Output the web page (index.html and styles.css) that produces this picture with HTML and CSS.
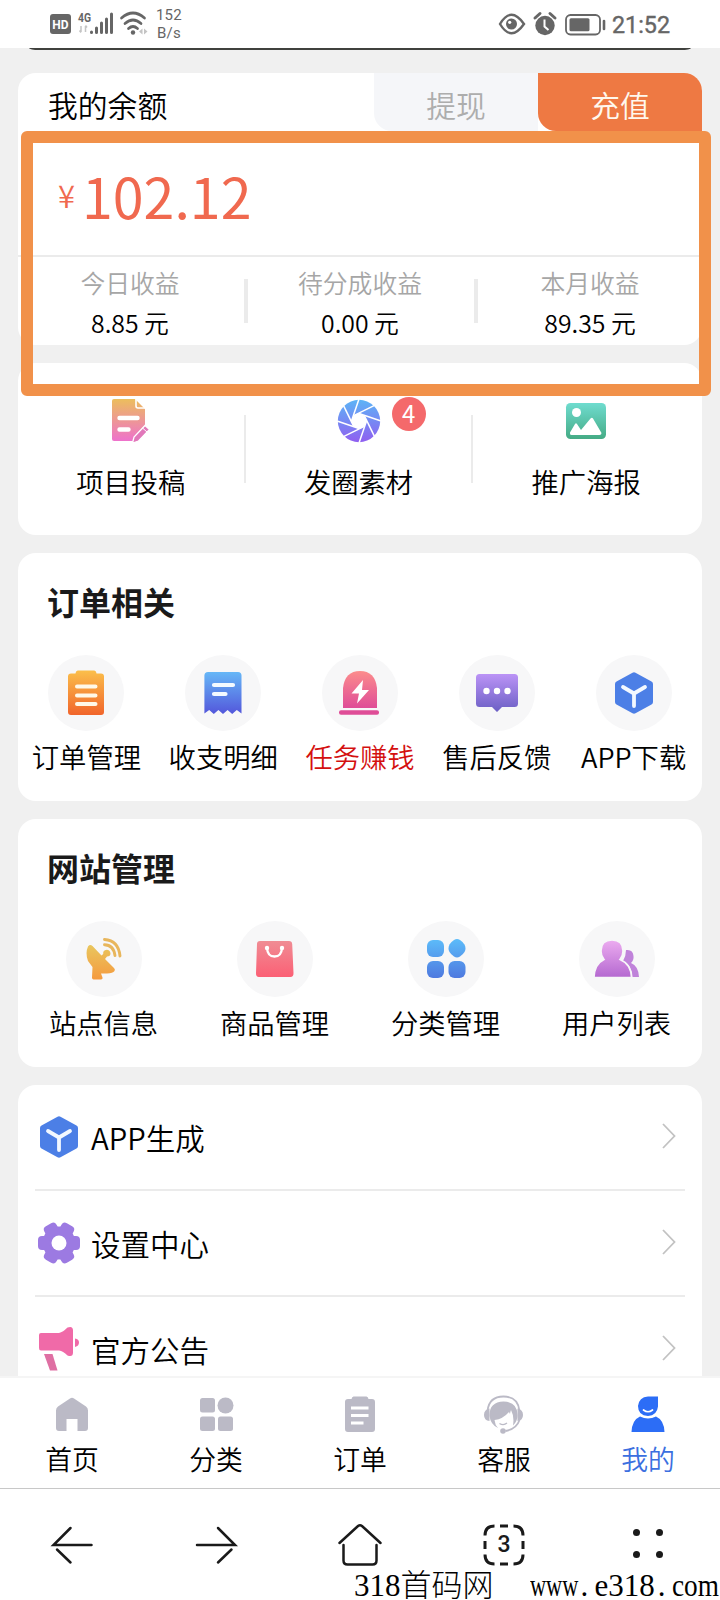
FILE: index.html
```
<!DOCTYPE html>
<html lang="zh-CN">
<head>
<meta charset="utf-8">
<title>我的</title>
<link rel="stylesheet" href="styles.css">
</head>
<body>
<svg class="defs" width="0" height="0" aria-hidden="true">
  <defs>
    <linearGradient id="gDoc" x1="0" y1="0" x2="0" y2="1"><stop offset="0" stop-color="#ecbe5c"/><stop offset="1" stop-color="#ee72cc"/></linearGradient>
    <linearGradient id="gLens" x1="0" y1="0" x2="0" y2="1"><stop offset="0" stop-color="#5cb4f6"/><stop offset="1" stop-color="#905ff0"/></linearGradient>
    <linearGradient id="gPic" x1="0" y1="0" x2="0" y2="1"><stop offset="0" stop-color="#6fdccf"/><stop offset="1" stop-color="#45ab85"/></linearGradient>
    <linearGradient id="gOrder" x1="0" y1="0" x2="0" y2="1"><stop offset="0" stop-color="#fbbf4b"/><stop offset="1" stop-color="#f1652b"/></linearGradient>
    <linearGradient id="gBill" x1="0" y1="0" x2="0" y2="1"><stop offset="0" stop-color="#66b7f7"/><stop offset="1" stop-color="#5357db"/></linearGradient>
    <linearGradient id="gAlarm" x1="0" y1="0" x2="0" y2="1"><stop offset="0" stop-color="#fc8c8c"/><stop offset="1" stop-color="#df4d97"/></linearGradient>
    <linearGradient id="gChat" x1="0" y1="0" x2="0" y2="1"><stop offset="0" stop-color="#bb93f6"/><stop offset="1" stop-color="#6b5fc4"/></linearGradient>
    <linearGradient id="gDish" x1="0" y1="0" x2="0" y2="1"><stop offset="0" stop-color="#e9c65e"/><stop offset="1" stop-color="#f59a3e"/></linearGradient>
    <linearGradient id="gBag" x1="0" y1="0" x2="0" y2="1"><stop offset="0" stop-color="#f08c94"/><stop offset="1" stop-color="#fb6075"/></linearGradient>
    <linearGradient id="gGrid" gradientUnits="userSpaceOnUse" x1="0" y1="0" x2="0" y2="38"><stop offset="0" stop-color="#5cbcfa"/><stop offset="1" stop-color="#4f7be0"/></linearGradient>
    <linearGradient id="gUser" x1="0" y1="0" x2="0" y2="1"><stop offset="0" stop-color="#ecacf0"/><stop offset="1" stop-color="#b468d0"/></linearGradient>
    <symbol id="cube" viewBox="0 0 40 42"><path fill="#4c7fe6" d="M18.5.7q1.500-.9 3 0L37.500 9.500q1.500.9 1.500 2.500v18q0 1.600-1.500 2.500l-16 8.800q-1.500.9-3 0l-16-8.800Q1 31.600 1 30V12q0-1.600 1.500-2.500z"/><path d="M9 15l11 6.500L31 15M20 21.500V34" fill="none" stroke="#f2f8ff" stroke-width="3.800" stroke-linecap="round" stroke-linejoin="round"/></symbol>
    <symbol id="chev" viewBox="0 0 16 28"><path d="M2 2l11.500 12L2 26" fill="none" stroke="#c2c2c2" stroke-width="1.800"/></symbol>
  </defs>
</svg>

<header class="status">
  <svg class="status-icons" width="104" height="26" viewBox="0 0 104 26">
    <rect x="0" y="3" width="21" height="20" rx="3" fill="#666"/>
    <text x="10.500" y="18" class="hd" text-anchor="middle">HD</text>
    <text x="28" y="11" class="g4" textLength="13" lengthAdjust="spacingAndGlyphs">4G</text>
    <path d="M31 15v6M29.500 19.500L31 21.500M35.500 21v-6M37 16.500L35.500 14.500" stroke="#c4c4c4" stroke-width="1.500" fill="none"/>
    <g stroke="#666" stroke-width="3" stroke-linecap="round"><path d="M41.500 21v.5M46.500 17v4.500M51.500 12v9.500M56.500 8v13.500M61.500 3v18.500"/></g>
    <g fill="none" stroke="#666" stroke-width="2.700" stroke-linecap="round"><path d="M71.500 7q11.500-10 23 0M75 12.500q8-7 16 0M78.500 17.500q4.500-4 9 0"/></g>
    <circle cx="83" cy="21.500" r="2.200" fill="#666"/>
    <path d="M92.500 17.500l-3.500 3 3.500 3zM94 17.500l3.500 3-3.500 3z" fill="#c4c4c4"/>
  </svg>
  <div class="speed">152<br>B/s</div>
  <div class="status-right">
    <svg width="112" height="26" viewBox="0 0 112 26">
      <g fill="none" stroke="#666" stroke-width="2.400"><path d="M2 13Q13-5.500 26 13 13 31.500 2 13z"/></g><circle cx="13.500" cy="13" r="5.500" fill="#666"/><circle cx="11.700" cy="11.300" r="1.600" fill="#fff"/>
      <circle cx="47" cy="14.500" r="9.700" fill="#666"/><path d="M37 7l5-4.500M57 7l-5-4.500" stroke="#666" stroke-width="3" stroke-linecap="round"/><path d="M46.500 8.500v7l4 3.500" fill="none" stroke="#fff" stroke-width="2"/>
      <rect x="68" y="4" width="34" height="19.500" rx="4.500" fill="none" stroke="#666" stroke-width="1.800"/><rect x="71.500" y="7.300" width="20" height="13" rx="1.500" fill="#666"/><path d="M106 10v8" stroke="#666" stroke-width="2.600" stroke-linecap="round"/>
    </svg>
    <span class="clock">21:52</span>
  </div>
</header>

<main class="page">
  <div class="banner-edge"></div>

  <section class="card balance">
    <div class="balance-head">
      <span class="balance-title">我的余额</span>
      <span class="tab withdraw">提现</span>
      <span class="tab recharge">充值</span>
    </div>
    <div class="amount"><span class="yen">¥</span><span class="num">102.12</span></div>
    <div class="stats">
      <div class="stat"><span class="stat-label">今日收益</span><span>8.85 元</span></div>
      <div class="bar"></div>
      <div class="stat mid"><span class="stat-label">待分成收益</span><span>0.00 元</span></div>
      <div class="bar"></div>
      <div class="stat"><span class="stat-label">本月收益</span><span>89.35 元</span></div>
    </div>
  </section>
  <div class="highlight"></div>

  <section class="card quick">
    <div class="quick-item">
      <svg width="40" height="46" viewBox="0 0 40 46"><path fill="url(#gDoc)" d="M3 1h21l10 10v17L22 43H3Q1 43 1 41V3Q1 1 3 1z"/><path d="M25 1v7q0 2 2 2h7" fill="none" stroke="#fff" stroke-width="1.600"/><path d="M8.500 20h18M8.500 31.500h9" stroke="#fff" stroke-width="4.400" stroke-linecap="round"/><path d="M34 27.500l4.500 4-11 11.500-6 2 1.500-6z" fill="#e178ba" stroke="#fff" stroke-width="1.300"/><path d="M31.500 30l4.500 4" stroke="#fff"/></svg>
      <span>项目投稿</span>
    </div>
    <div class="rule"></div>
    <div class="quick-item">
      <svg width="44" height="46" viewBox="0 0 44 46"><circle cx="22" cy="23" r="21.200" fill="url(#gLens)"/><circle cx="22" cy="23" r="7.500" fill="#fff"/><g stroke="#fff" stroke-width="1.500"><path id="blade" d="M14.500 23L22 1"/><use href="#blade" transform="rotate(45 22 23)"/><use href="#blade" transform="rotate(90 22 23)"/><use href="#blade" transform="rotate(135 22 23)"/><use href="#blade" transform="rotate(180 22 23)"/><use href="#blade" transform="rotate(225 22 23)"/><use href="#blade" transform="rotate(270 22 23)"/><use href="#blade" transform="rotate(315 22 23)"/></g></svg>
      <span>发圈素材</span>
      <b class="badge">4</b>
    </div>
    <div class="rule"></div>
    <div class="quick-item">
      <svg width="40" height="46" viewBox="0 0 40 46"><rect y="5" width="40" height="36" rx="4.500" fill="url(#gPic)"/><circle cx="10.500" cy="14.500" r="4.500" fill="#fff"/><path d="M4 34.500l5-8.500q1-1.500 2 0l4 6 9.500-11.500q1.500-1.500 2.500 0l8.500 14.500q0 2-2 2H5.500q-2 0-1.500-2z" fill="#fff"/></svg>
      <span>推广海报</span>
    </div>
  </section>

  <section class="card group">
    <h2>订单相关</h2>
    <div class="grid">
      <div class="item"><i><svg width="36" height="46" viewBox="0 0 36 46"><path fill="url(#gOrder)" d="M10 .5h16q2 0 2.500 3H33q3 0 3 3V42q0 3-3 3H3q-3 0-3-3V6.500q0-3 3-3h4.500Q8 .5 10 .5z"/><path d="M9 16.500h18.500M9 25.500h18.500M9 34h18.500" stroke="#fff8e8" stroke-width="4" stroke-linecap="round"/></svg></i><span>订单管理</span></div>
      <div class="item"><i><svg width="38" height="46" viewBox="0 0 38 46"><path fill="url(#gBill)" d="M4 2h30q3.500 0 3.500 3.500V43.500L32.800 40l-4.600 4-4.600-4-4.600 4-4.600-4-4.600 4-4.600-4-4.800 3.500V5.500Q.5 2 4 2z"/><path d="M10 15h19M10 24h11.500" stroke="#f4faff" stroke-width="4.200" stroke-linecap="round"/></svg></i><span>收支明细</span></div>
      <div class="item hot"><i><svg width="40" height="46" viewBox="0 0 40 46"><path fill="url(#gAlarm)" d="M3 38V18Q5 1 20 1t17 17v20z"/><rect x="-1" y="40.300" width="40" height="4.400" rx="2" fill="#df4d97"/><path d="M23 10L11.500 23.500H19L17 33.500 29 20h-7z" fill="#fff"/></svg></i><span>任务赚钱</span></div>
      <div class="item"><i><svg width="42" height="46" viewBox="0 0 42 46"><path fill="url(#gChat)" d="M3.500 4h35Q42 4 42 7.500v26q0 3.500-3.500 3.500H26l-5 5-5-5H3.500Q0 37 0 33.500v-26Q0 4 3.500 4z"/><g fill="#fff"><circle cx="10.500" cy="21" r="3.200"/><circle cx="21" cy="21" r="3.200"/><circle cx="31.500" cy="21" r="3.200"/></g></svg></i><span>售后反馈</span></div>
      <div class="item"><i><svg width="40" height="42"><use href="#cube"/></svg></i><span>APP下载</span></div>
    </div>
  </section>

  <section class="card group">
    <h2>网站管理</h2>
    <div class="grid">
      <div class="item"><i><svg width="38" height="44" viewBox="0 0 38 44"><path fill="url(#gDish)" d="M7.500 9Q5 7 3 9.500 0 16 3 24l4.500 6-.5 10.500q0 2 1.500 2h7.500q2 0 1.500-2L16 36.500h6q6-.3 7.500-2.500 1-1.500-.5-3L20 22l2-2.500q3.500 0 3.500-3.200-.5-3.500-3.800-3.500-4 .5-3.500 4.200L16.500 18.500z"/><path d="M19.500 7.800Q28.500 8 30 18.500M19.500 2.500Q33.500 3.500 35 19" fill="none" stroke="#e8b65c" stroke-width="2.900" stroke-linecap="round"/></svg></i><span>站点信息</span></div>
      <div class="item"><i><svg width="40" height="40" viewBox="0 0 40 40"><path fill="url(#gBag)" d="M5 2h29q3 0 3.200 3l1.300 29q.2 4-3.200 4H4Q.8 38 1 34L2 5q0-3 3-3z"/><path d="M12 9q.5 8.500 7.500 8.500T27 9" fill="none" stroke="#fff" stroke-width="2.300"/><circle cx="12" cy="9" r="2.200" fill="#fff"/><circle cx="27" cy="9" r="2.200" fill="#fff"/></svg></i><span>商品管理</span></div>
      <div class="item"><i><svg width="40" height="40" viewBox="0 0 40 40"><g fill="url(#gGrid)"><rect x="1" y="1" width="17" height="17" rx="6"/><path d="M28 1q3-2 6 0 3 2 4.500 4.500 2 4 0 7.500Q37 15.500 34 17.500q-3 2-6 0-3-2-4.500-4.500-2-3.500 0-7.500Q25 3 28 1z"/><rect x="1" y="22" width="17" height="17" rx="6"/><rect x="22.500" y="22" width="17" height="17" rx="6"/></g></svg></i><span>分类管理</span></div>
      <div class="item"><i><svg width="46" height="38" viewBox="0 0 46 38"><path d="M32 10q7-1 7.500 6 .5 4-2.500 7 7.500 3 8 14h-6.500Q38 25 29 21q3-5 3-11z" fill="#c083da"/><path stroke="#f7f7f8" stroke-width="1.600" fill="url(#gUser)" d="M18 0q11 0 11 11 0 5-3 8.500Q37 24 37.500 37.500H0Q.5 24 10 19.500 7 16 7 11 7 0 18 0z"/></svg></i><span>用户列表</span></div>
    </div>
  </section>

  <section class="card list">
    <div class="row"><svg class="row-icon" width="46" height="42" viewBox="0 0 46 42"><use href="#cube" width="40" height="42" x="4"/></svg><span>APP生成</span><svg width="16" height="28"><use href="#chev"/></svg></div>
    <div class="row"><svg class="row-icon" width="46" height="42" viewBox="-3 0 46 42"><g fill="#9c7ae2"><circle cx="21" cy="21" r="16.500"/><rect id="tooth" x="0" y="14" width="42" height="14" rx="4"/><use href="#tooth" transform="rotate(60 21 21)"/><use href="#tooth" transform="rotate(120 21 21)"/></g><circle cx="21" cy="21" r="7.500" fill="#fff"/></svg><span>设置中心</span><svg width="16" height="28"><use href="#chev"/></svg></div>
    <div class="row"><svg class="row-icon" width="46" height="46" viewBox="-3 0 46 46"><path fill="#f06aa8" d="M3 7h18q4-1 8.500-5.500 5.500-2 5.500 3v22q0 5-5.500 3Q25 25 21 24.500H3Q1 24.500 1 22V9Q1 7 3 7zM37 12.500q4 .5 4 4t-4 4.500z"/><path fill="#df6fa3" d="M6 28h8.500L19.500 44.500H12z"/></svg><span>官方公告</span><svg width="16" height="28"><use href="#chev"/></svg></div>
  </section>
</main>

<nav class="tabs">
  <div><svg width="40" height="40" viewBox="0 0 40 40"><path fill="#bbbac6" d="M18 4.500q2-1.500 4 0l12 8q2 1.500 2 4V34q0 3-3 3h-7.500V25h-11v12H7q-3 0-3-3V16.500q0-2.500 2-4z"/></svg><span>首页</span></div>
  <div><svg width="40" height="40" viewBox="0 0 40 40"><g fill="#bbbac6"><rect x="4" y="4" width="15" height="14.500" rx="2.500"/><circle cx="29.500" cy="11.500" r="8"/><rect x="4" y="22.500" width="15" height="14.500" rx="2.500"/><rect x="22" y="22.500" width="15" height="14.500" rx="2.500"/></g></svg><span>分类</span></div>
  <div><svg width="40" height="40" viewBox="0 0 40 40"><path fill="#bbbac6" d="M13.500 2.500h13q1.500 0 2 2.500H32q3 0 3 3v27q0 3-3 3H8q-3 0-3-3V8q0-3 3-3h3.500q.5-2.500 2-2.500z"/><path d="M11 14h17.500M11 21.500h17.500M11 29h12.500" stroke="#fff" stroke-width="2.800"/></svg><span>订单</span></div>
  <div><svg width="40" height="40" viewBox="0 0 40 40"><path d="M3.500 17Q5 2.500 19.500 2.500T35.500 17M35.500 26q-3 9-14 11" fill="none" stroke="#bbbac6" stroke-width="1.800"/><path fill="#bbbac6" d="M5.500 14.500V27Q0 26.500 0 21t5.500-6.500zM33.500 14.500V27q5.500-.5 5.500-6t-5.500-6.500z"/><path fill="#bbbac6" d="M5.500 22Q5 8 19.500 7.500 34 8 33.500 22q0 5-4.500 9.500 1.500-9-2-15.500-1 2.500-1 4l-1-2q-6 7-14.500 8 .5 5 3.500 8Q6.500 30.500 5.500 22z"/><circle cx="19" cy="37" r="2.800" fill="#bbbac6"/><path d="M15.500 29.500q4 2.500 7.500-.5" stroke="#bbbac6" stroke-width="1.300" fill="none"/></svg><span>客服</span></div>
  <div class="active"><svg width="40" height="40" viewBox="0 0 40 40"><path fill="#2c6df6" d="M20 2.500h10v10q-1 9-10 9.500-10-.5-10-10 1-9 10-9.500zM3.500 38Q4 26 12 22.500q8 4 16 0Q36 26 36.500 38z"/><path d="M15.500 16q4.500 3.500 9 0" fill="none" stroke="#fff" stroke-width="1.700" stroke-linecap="round"/></svg><span>我的</span></div>
</nav>

<footer class="browser">
  <svg width="44" height="44" viewBox="0 0 44 44"><path d="M20.500 5L3.500 22h38M7 26.500L20.500 39.500" class="ink"/></svg>
  <svg width="44" height="44" viewBox="0 0 44 44"><path d="M24 5L41 22H3M37.500 26.500L24 39.500" class="ink"/></svg>
  <svg width="44" height="44" viewBox="0 0 44 44"><path d="M1.500 20L20 3q2-1.500 4 0l18.500 17M5.500 22v15.500q0 4 4 4h25q4 0 4-4V22" class="ink"/></svg>
  <svg width="44" height="44" viewBox="0 0 44 44"><path d="M3 12.500Q3 3 12.500 3M18 3h8M31.500 3Q41 3 41 12.500M41 18v8M41 31.500Q41 41 31.500 41M26 41h-8M12.500 41Q3 41 3 31.500M3 26v-8" class="ink dash"/><text x="22" y="29" text-anchor="middle" class="count">3</text></svg>
  <svg width="44" height="44" viewBox="0 0 44 44"><g fill="#1a1a1a"><circle cx="10.500" cy="9.500" r="3.500"/><circle cx="33.500" cy="9.500" r="3.500"/><circle cx="10.500" cy="31.500" r="3.500"/><circle cx="33.500" cy="31.500" r="3.500"/></g></svg>
</footer>
<div class="watermark"><span>318首码网</span><span class="site"><span class="www">www</span><span class="dot">.</span>e318<span class="dot">.</span><span class="com">com</span></span></div>
</body>
</html>
```
FILE: styles.css
```
* { box-sizing: border-box; }

body {
  margin: 0;
  width: 720px;
  height: 1600px;
  position: relative;
  overflow: hidden;
  display: flex;
  flex-direction: column;
  background: #fff;
  color: #000;
  font-family: "Noto Sans CJK SC", sans-serif;
  font-weight: 350;
}

svg { display: block; flex: none; overflow: visible; }
.defs { position: absolute; }

.status {
  flex: none;
  height: 48px;
  padding: 0 50px 0 50px;
  display: flex;
  align-items: center;
  color: #666;
  font-family: Roboto, sans-serif;
}
.hd { font: bold 12px Roboto, sans-serif; fill: #fff; }
.g4 { font: bold 13px Roboto, sans-serif; fill: #666; }
.speed { font-size: 15px; line-height: 18px; font-weight: 400; text-align: center; letter-spacing: .3px; width: 30px; }
.status-right { margin-left: auto; display: flex; align-items: center; gap: 2px; }
.clock { font-size: 23.300px; line-height: 26px; font-weight: 400; padding-top: 2px; -webkit-text-stroke: .4px #666; }

.page {
  flex: none;
  height: 1330px;
  padding: 0 18px;
  overflow: hidden;
  background: #f0f0f0;
  border-bottom: 2px solid #f5f5f5;
}
.banner-edge { height: 2px; margin: 0 11px 23px; background: #40413e; border-radius: 0 0 10px 10px / 0 0 2px 2px; }

.card { background: #fff; border-radius: 18px; margin-bottom: 18px; }

.balance { height: 272px; overflow: hidden; }
.balance-head { display: flex; height: 58px; font-size: 29.800px; line-height: 62px; }
.balance-title { flex: 1; padding-left: 30px; }
.tab { width: 164px; text-align: center; border-bottom-left-radius: 18px; }
.withdraw { background: #f5f6f9; color: #adadad; }
.recharge { background: #ee7943; color: #fff8ee; }
.amount { display: flex; height: 126px; border-bottom: 2px solid #ebebeb; color: #f0694f; padding-left: 40px; }
.yen { font-size: 31px; line-height: 128px; width: 24px; }
.num { font-size: 55.500px; line-height: 128px; font-weight: 400; }
.stats { display: flex; font-size: 24.800px; }
.stat { flex: 1; display: flex; flex-direction: column; text-align: center; line-height: 40px; padding: 5px 2px 0 0; }
.stat:last-child { padding-right: 0; }
.stat.mid { flex: none; width: 226px; }
.stat-label { color: #a6a6a6; }
.bar { width: 4px; height: 44px; margin-top: 22px; background: #ebebeb; }

/* Marker box drawn over the balance card */
.highlight {
  position: absolute;
  left: 21px;
  top: 131px;
  width: 690px;
  height: 265px;
  border: 12px solid #f1914a;
  border-radius: 6px;
}

.quick { height: 172px; display: flex; padding: 35px 3px 0 0; }
.quick-item { position: relative; flex: 1; display: flex; flex-direction: column; align-items: center; font-size: 27.300px; line-height: 40px; gap: 17px; }
.quick .rule { width: 2px; height: 68px; margin-top: 17px; background: #ebebeb; }
.badge {
  position: absolute;
  left: 146px;
  top: -1px;
  width: 34px;
  height: 34px;
  border-radius: 50%;
  background: #f4696b;
  color: #fff;
  font: 400 24px/32px "Noto Sans CJK SC", sans-serif;
  text-align: center;
}

.group { height: 248px; padding-top: 27px; }
.group h2 { margin: 0; padding-left: 29px; font-size: 32px; line-height: 42px; font-weight: 700; color: #1a1a1a; }
.grid { display: flex; margin-top: 33px; }
.item { flex: 1; display: flex; flex-direction: column; align-items: center; white-space: nowrap; font-size: 27.300px; line-height: 40px; gap: 5px; }
.item i { display: flex; align-items: center; justify-content: center; width: 76px; height: 76px; border-radius: 50%; background: #f7f7f8; }
.hot { color: #d4100f; }

.list { padding: 0 17px; height: 340px; }
.row { display: flex; align-items: center; height: 106px; font-size: 29.500px; line-height: 40px; border-bottom: 2px solid #ebebeb; }
.row span { flex: 1; padding: 0 0 0 10px; }
.row > svg:last-child { margin: -2px 8px 0 0; }

.tabs { flex: none; height: 111px; display: flex; background: #fff; border-bottom: 1px solid #c8c8c8; font-size: 26.800px; line-height: 40px; }
.tabs div { flex: 1; display: flex; flex-direction: column; align-items: center; padding-top: 16px; gap: 5px; }
.tabs .active { color: #3b6fe0; }

.browser { flex: none; height: 111px; display: flex; justify-content: space-around; padding: 34px 0 0; background: #fff; }
.browser svg { margin: 0 50px; }
.ink { fill: none; stroke: #1a1a1a; stroke-width: 2.500; stroke-linecap: round; }
.dash { stroke-width: 3; stroke-linecap: butt; }
.count { font: 500 23px Roboto, sans-serif; fill: #1a1a1a; }

/* Site mark laid over the bottom toolbar */
.watermark {
  position: absolute;
  left: 354px;
  top: 1568px;
  display: flex;
  gap: 36px;
  white-space: nowrap;
  font-family: "Liberation Serif", "Noto Sans CJK SC", serif;
  font-weight: 300;
  font-size: 31px;
  line-height: 36px;
  height: 32px;
}
.site { display: flex; }
.www { width: 48px; transform: scaleX(.72); transform-origin: left; }
.dot { width: 17px; padding-left: 3px; }
.com { width: 48px; transform: scaleX(.88); transform-origin: left; }
```
